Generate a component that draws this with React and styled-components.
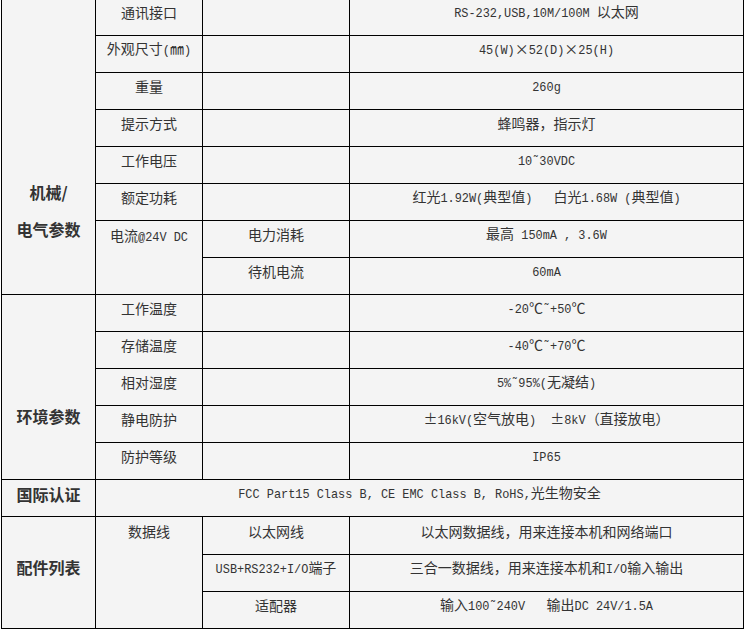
import React from 'react';
import styled, { createGlobalStyle } from 'styled-components';

const GlobalStyle = createGlobalStyle`
  html, body {
    margin: 0;
    padding: 0;
    background: #fff;
  }
  body {
    overflow: hidden;
  }
`;

const Page = styled.div`
  padding-left: 1px;
  margin-top: -2px;
`;

const SpecTable = styled.table`
  width: 742px;
  table-layout: fixed;
  border-collapse: collapse;
  background: #f4f4f4;
  color: #333;
  font-family: "Noto Sans CJK SC", sans-serif;
  font-size: 14px;
`;

const Row = styled.tr`
  height: ${p => (p.$tall ? 38 : 37)}px;
`;

const Cell = styled.td`
  padding: ${p => (p.$top ? '4px 2px 0' : '0 2px 10px')};
  border: 1px solid #000;
  text-align: center;
  vertical-align: ${p => (p.$top ? 'top' : 'middle')};
  line-height: 20px;
  white-space: pre;
`;

const Category = styled(Cell)`
  font-size: 16px;
  font-weight: 700;
  line-height: ${p => p.$lh || 20}px;
  vertical-align: ${p => p.$align || 'middle'};
  padding: ${p => p.$pad || '0 0 9px'};
`;

const Latin = styled.span`
  font-family: "Liberation Mono", monospace;
  font-size: 11.9px;
`;

// SimSun style: half width latin, full width han
const mix = text =>
  text
    .split(/([\x20-\x7e\u02dc]+)/)
    .filter(Boolean)
    .map((part, i) =>
      /[\x20-\x7e\u02dc]/.test(part[0]) ? <Latin key={i}>{part}</Latin> : part
    );

const plain = [
  ['通讯接口', 'RS-232,USB,10M/100M 以太网'],
  ['外观尺寸(㎜)', '45(W)×52(D)×25(H)'],
  ['重量', '260g'],
  ['提示方式', '蜂鸣器，指示灯'],
  ['工作电压', '10˜30VDC'],
  ['额定功耗', '红光1.92W(典型值)\u3000 白光1.68W (典型值)'],
];

const env = [
  ['工作温度', '-20℃˜+50℃'],
  ['存储温度', '-40℃˜+70℃'],
  ['相对湿度', '5%˜95%(无凝结)'],
  ['静电防护', '±16kV(空气放电)\u3000±8kV（直接放电）'],
  ['防护等级', 'IP65'],
];

const App = () => (
  <Page>
    <GlobalStyle />
    <SpecTable>
      <colgroup>
        <col style={{ width: 94 }} />
        <col style={{ width: 107 }} />
        <col style={{ width: 147 }} />
        <col style={{ width: 394 }} />
      </colgroup>
      <tbody>
        {plain.map(([label, value], i) => (
          <Row key={label}>
            {i === 0 && (
              <Category rowSpan={8} $align="bottom" $pad="0 0 46px" $lh={37}>
                机械/
                <br />
                电气参数
              </Category>
            )}
            <Cell>{mix(label)}</Cell>
            <Cell />
            <Cell>{mix(value)}</Cell>
          </Row>
        ))}
        <Row>
          <Cell rowSpan={2} $top>{mix('电流@24V DC')}</Cell>
          <Cell>电力消耗</Cell>
          <Cell>{mix('最高 150mA , 3.6W')}</Cell>
        </Row>
        <Row>
          <Cell>待机电流</Cell>
          <Cell>{mix('60mA')}</Cell>
        </Row>

        {env.map(([label, value], i) => (
          <Row key={label}>
            {i === 0 && (
              <Category rowSpan={5} $pad="57px 0 0">
                环境参数
              </Category>
            )}
            <Cell>{label}</Cell>
            <Cell />
            <Cell>{mix(value)}</Cell>
          </Row>
        ))}

        <Row>
          <Category>国际认证</Category>
          <Cell colSpan={3}>
            {mix('FCC Part15 Class B, CE EMC Class B, RoHS,光生物安全')}
          </Cell>
        </Row>

        <Row $tall>
          <Category rowSpan={3} $pad="0 0 12px">配件列表</Category>
          <Cell rowSpan={3} $top>数据线</Cell>
          <Cell>以太网线</Cell>
          <Cell>以太网数据线，用来连接本机和网络端口</Cell>
        </Row>
        <Row>
          <Cell>{mix('USB+RS232+I/O端子')}</Cell>
          <Cell>{mix('三合一数据线，用来连接本机和I/O输入输出')}</Cell>
        </Row>
        <Row>
          <Cell>适配器</Cell>
          <Cell>{mix('输入100˜240V   输出DC 24V/1.5A')}</Cell>
        </Row>
      </tbody>
    </SpecTable>
  </Page>
);

export default App;
